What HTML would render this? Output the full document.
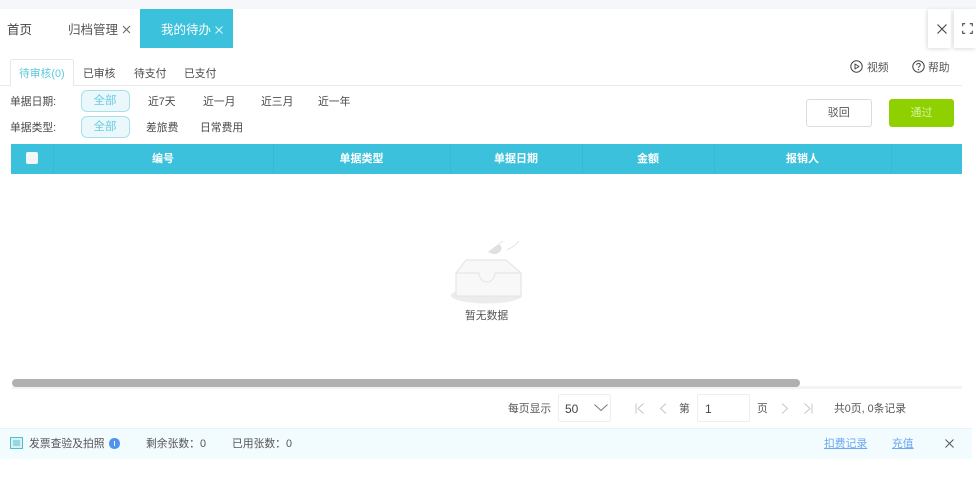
<!DOCTYPE html>
<html lang="zh">
<head>
<meta charset="utf-8">
<style>
html,body{margin:0;padding:0;background:#fff;}
body{width:976px;height:500px;position:relative;overflow:hidden;font-family:"Liberation Sans","Noto Sans CJK SC",sans-serif;color:#4a4a4a;}
.a{position:absolute;white-space:nowrap;line-height:16px;}
.b{position:absolute;box-sizing:border-box;}
.t11{font-size:10.8px;}
.t13{font-size:12.5px;}
.c{color:#5cc8de;}
.pill{position:absolute;box-sizing:border-box;left:80.5px;width:49px;height:22px;border:1px solid #a8dfea;border-radius:6px;background:#eaf7fb;color:#6accE0;font-size:11.5px;line-height:20px;text-align:center;}
.th{position:absolute;top:152px;color:#fff;font-weight:bold;font-size:11px;line-height:14px;transform:translateX(-50%);white-space:nowrap;}
.dv{position:absolute;top:144px;width:1px;height:29px;background:#38b9d2;}
svg{position:absolute;overflow:visible;}
</style>
</head>
<body>
<div class="b" style="left:0;top:0;width:976px;height:9px;background:#f6f7fa;"></div>

<div class="a t13" style="left:7px;top:22px;color:#444;">首页</div>
<div class="a t13" style="left:68px;top:22px;color:#555;">归档管理</div>
<svg style="left:122px;top:25px;" width="9" height="9" viewBox="0 0 9 9"><path d="M1 1L8 8M8 1L1 8" stroke="#666" stroke-width="1" fill="none"/></svg>
<div class="b" style="left:139.5px;top:9px;width:93px;height:38.5px;background:#3cc1dc;"></div>
<div class="a t13" style="left:161px;top:22px;color:#fff;">我的待办</div>
<svg style="left:215px;top:25.5px;" width="8" height="8" viewBox="0 0 8 8"><path d="M.5 .5L7.5 7.5M7.5 .5L.5 7.5" stroke="#e4f7fb" stroke-width="1" fill="none"/></svg>

<div class="b" style="left:928px;top:9px;width:23px;height:39px;background:#fff;box-shadow:-1px 1px 4px rgba(0,0,0,.14);"></div>
<div class="b" style="left:954px;top:9px;width:22px;height:39px;background:#fff;box-shadow:-1px 1px 4px rgba(0,0,0,.14);"></div>
<svg style="left:936.5px;top:24px;" width="10" height="10" viewBox="0 0 10 10"><path d="M.5 .5L9.5 9.5M9.5 .5L.5 9.5" stroke="#444" stroke-width="1.1" fill="none"/></svg>
<svg style="left:962px;top:23px;" width="11" height="11" viewBox="0 0 11 11"><path d="M.7 3.2V.7H3.2M7.8 .7H10.3V3.2M10.3 7.8V10.3H7.8M3.2 10.3H.7V7.8" stroke="#444" stroke-width="1.1" fill="none"/></svg>

<!-- sub tabs -->
<div class="b" style="left:0;top:85px;width:962px;height:1px;background:#e8e8e8;"></div>
<div class="b" style="left:10px;top:59px;width:64px;height:27px;background:#fff;border:1px solid #e6e6e6;border-bottom:0;border-radius:3px 3px 0 0;"></div>
<div class="a t11 c" style="left:19px;top:66px;">待审核(0)</div>
<div class="a t11" style="left:83px;top:66px;">已审核</div>
<div class="a t11" style="left:134px;top:66px;">待支付</div>
<div class="a t11" style="left:184px;top:66px;">已支付</div>

<svg style="left:850px;top:60px;" width="13" height="13" viewBox="0 0 13 13"><circle cx="6.5" cy="6.5" r="5.7" stroke="#444" stroke-width="1" fill="none"/><path d="M5 4L9 6.5L5 9Z" stroke="#444" stroke-width="1" fill="none" stroke-linejoin="round"/></svg>
<div class="a t11" style="left:867px;top:60px;color:#555;">视频</div>
<svg style="left:912px;top:60px;" width="13" height="13" viewBox="0 0 13 13"><circle cx="6.5" cy="6.5" r="5.7" stroke="#444" stroke-width="1" fill="none"/><path d="M4.7 5.1C4.7 2.9 8.3 2.9 8.3 5C8.3 6.3 6.5 6.3 6.5 7.9" stroke="#444" stroke-width="1" fill="none"/><circle cx="6.5" cy="9.6" r=".7" fill="#444"/></svg>
<div class="a t11" style="left:928px;top:60px;color:#555;">帮助</div>

<!-- filters -->
<div class="a t11" style="left:10px;top:93.5px;">单据日期:</div>
<div class="pill" style="top:90px;">全部</div>
<div class="a t11" style="left:148px;top:93.5px;">近7天</div>
<div class="a t11" style="left:203px;top:93.5px;">近一月</div>
<div class="a t11" style="left:261px;top:93.5px;">近三月</div>
<div class="a t11" style="left:318px;top:93.5px;">近一年</div>
<div class="a t11" style="left:10px;top:120px;">单据类型:</div>
<div class="pill" style="top:116px;">全部</div>
<div class="a t11" style="left:146px;top:120px;">差旅费</div>
<div class="a t11" style="left:200px;top:120px;">日常费用</div>

<div class="b" style="left:806px;top:98.5px;width:65.5px;height:28.5px;border:1px solid #dcdcdc;border-radius:3px;background:#fff;color:#555;font-size:11px;line-height:27px;text-align:center;">驳回</div>
<div class="b" style="left:889px;top:98.5px;width:65px;height:28.5px;border-radius:3px;background:#8fd000;color:#d8f2a0;font-size:11px;line-height:28.5px;text-align:center;">通过</div>

<!-- table head -->
<div class="b" style="left:11px;top:144px;width:951px;height:29.5px;background:#3cc1dc;"></div>
<div class="dv" style="left:53px;"></div>
<div class="dv" style="left:273px;"></div>
<div class="dv" style="left:450px;"></div>
<div class="dv" style="left:582px;"></div>
<div class="dv" style="left:714px;"></div>
<div class="dv" style="left:891px;"></div>
<div class="b" style="left:25.5px;top:152px;width:12px;height:12px;border-radius:2px;background:#f4f6f8;"></div>
<div class="th" style="left:163px;">编号</div>
<div class="th" style="left:361.5px;">单据类型</div>
<div class="th" style="left:516px;">单据日期</div>
<div class="th" style="left:648px;">金额</div>
<div class="th" style="left:802.5px;">报销人</div>

<!-- empty state -->
<svg style="left:450px;top:238px;" width="74" height="68" viewBox="0 0 74 68">
<ellipse cx="36.5" cy="57.5" rx="35.5" ry="8" fill="#ececec"/>
<path d="M7 35L17 22H57L72 35V58H7Z" transform="translate(-1 0)" fill="#f8f8f8" stroke="#e6e6e6" stroke-width="1.2" stroke-linejoin="round"/>
<path d="M6 35H29C30 47 44 47 45 35H71" fill="none" stroke="#e6e6e6" stroke-width="1.2"/>
<path d="M38 14C42 11 45 8 49 6C53 9 52 13 48 15C45 17 42 16 38 14Z" fill="#e0e0e0"/>
<path d="M49 6L53 3M57 12C61 10 65 8 69 3" stroke="#e4e4e4" stroke-width="1" fill="none"/>
</svg>
<div class="a t11" style="left:465px;top:308px;color:#555;">暂无数据</div>

<!-- scrollbar -->
<div class="b" style="left:12px;top:386px;width:950px;height:2.5px;background:#f3f3f3;"></div>
<div class="b" style="left:12px;top:379px;width:788px;height:7.5px;border-radius:4px;background:#b0b0b0;"></div>

<!-- pagination -->
<div class="a t11" style="left:508px;top:401px;color:#555;">每页显示</div>
<div class="b" style="left:558px;top:394px;width:53px;height:28px;border:1px solid #eee;border-radius:3px;"></div>
<div class="a" style="left:565px;top:401px;color:#444;font-size:12px;">50</div>
<svg style="left:594px;top:404px;" width="14" height="7" viewBox="0 0 14 7"><path d="M.5 .5L7 6.5L13.5 .5" stroke="#777" stroke-width="1" fill="none"/></svg>
<svg style="left:635px;top:403px;" width="10" height="11" viewBox="0 0 10 11"><path d="M1 .5V10.5M8.5 .5L3 5.5L8.5 10.5" stroke="#c4c4c4" stroke-width="1" fill="none"/></svg>
<svg style="left:659px;top:403px;" width="8" height="11" viewBox="0 0 8 11"><path d="M7 .5L1.5 5.5L7 10.5" stroke="#c4c4c4" stroke-width="1" fill="none"/></svg>
<div class="a t11" style="left:679px;top:401px;color:#555;">第</div>
<div class="b" style="left:697px;top:394px;width:53px;height:28px;border:1px solid #eee;border-radius:2px;"></div>
<div class="a" style="left:705px;top:401px;color:#444;font-size:12px;">1</div>
<div class="a t11" style="left:757px;top:401px;color:#555;">页</div>
<svg style="left:781px;top:403px;" width="8" height="11" viewBox="0 0 8 11"><path d="M1 .5L6.5 5.5L1 10.5" stroke="#c8c8c8" stroke-width="1" fill="none"/></svg>
<svg style="left:803px;top:403px;" width="10" height="11" viewBox="0 0 10 11"><path d="M9 .5V10.5M1.5 .5L7 5.5L1.5 10.5" stroke="#c8c8c8" stroke-width="1" fill="none"/></svg>
<div class="a t11" style="left:834px;top:401px;color:#555;">共0页, 0条记录</div>

<!-- bottom bar -->
<div class="b" style="left:0;top:428px;width:972px;height:31px;background:#f2fbfe;border-top:1px solid #e8f3f6;"></div>
<svg style="left:10px;top:437px;" width="13" height="12" viewBox="0 0 13 12"><rect x=".5" y=".5" width="12" height="11" fill="#d6f0f4" stroke="#52bfcd"/><path d="M3 4H10M3 6H10M3 8H10" stroke="#52bfcd" stroke-width=".9" fill="none"/></svg>
<div class="a t11" style="left:29px;top:436px;color:#555;">发票查验及拍照</div>
<div class="b" style="left:109px;top:438px;width:10.5px;height:10.5px;border-radius:50%;background:#4f94ee;"></div>
<div class="b" style="left:113.7px;top:440.5px;width:1.2px;height:5px;background:#fff;"></div>
<div class="a t11" style="left:146px;top:436px;color:#555;">剩余张数：0</div>
<div class="a t11" style="left:232px;top:436px;color:#555;">已用张数：0</div>
<div class="a t11" style="left:824px;top:436px;color:#6ea8ee;text-decoration:underline;">扣费记录</div>
<div class="a t11" style="left:892px;top:436px;color:#6ea8ee;text-decoration:underline;">充值</div>
<svg style="left:945px;top:439px;" width="9" height="9" viewBox="0 0 9 9"><path d="M.5 .5L8.5 8.5M8.5 .5L.5 8.5" stroke="#555" stroke-width="1" fill="none"/></svg>
</body>
</html>
